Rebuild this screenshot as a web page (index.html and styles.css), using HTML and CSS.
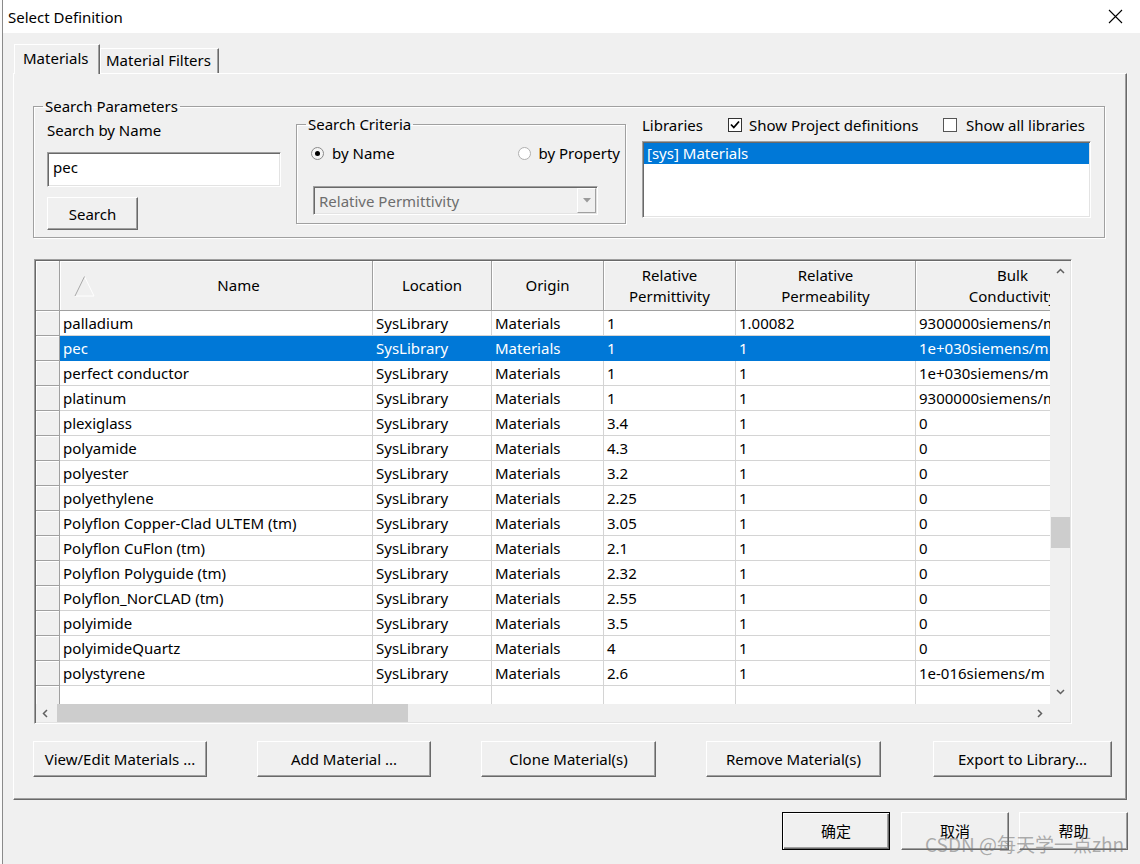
FILE: index.html
```html
<!DOCTYPE html>
<html>
<head>
<meta charset="utf-8">
<title>Select Definition</title>
<link rel="stylesheet" href="styles.css">
</head>
<body>
<div class="screen">
  <div class="bg-left"></div>
  <div class="window">
    <div class="titlebar">
      <span class="title">Select Definition</span>
      <svg class="close" width="15" height="15" viewBox="0 0 15 15"><path d="M1 1 L14 14 M14 1 L1 14" stroke="#000" stroke-width="1.1" fill="none"/></svg>
    </div>
    <div class="client">
      <div class="tabs">
        <div class="tab active">Materials</div>
        <div class="tab">Material Filters</div>
      </div>
      <div class="panel-row">
        <div class="panel">
          <fieldset class="group params">
            <legend>Search Parameters</legend>
            <div class="params-body">
              <div class="by-name">
                <div class="label">Search by Name</div>
                <div class="input">pec</div>
                <div class="btn search-btn">Search</div>
              </div>
              <fieldset class="group criteria">
                <legend>Search Criteria</legend>
                <div class="radios">
                  <span class="radio-item"><span class="radio checked"></span>by Name</span>
                  <span class="radio-item"><span class="radio"></span>by Property</span>
                </div>
                <div class="select">
                  <span class="select-text">Relative Permittivity</span>
                  <span class="drop"><svg width="8" height="5" viewBox="0 0 8 5"><path d="M0 0 L8 0 L4 4.5 Z" fill="#9a9a9a"/></svg></span>
                </div>
              </fieldset>
              <div class="libs">
                <div class="libs-head">
                  <span class="libs-label">Libraries</span>
                  <span class="check-item first"><span class="check"><svg width="12" height="12" viewBox="0 0 12 12"><path d="M2 5.5 L4.8 8.5 L10 2.5" fill="none" stroke="#000" stroke-width="1.8"/></svg></span>Show Project definitions</span>
                  <span class="check-item"><span class="check"></span>Show all libraries</span>
                </div>
                <div class="listbox"><div class="list-sel">[sys] Materials</div></div>
              </div>
            </div>
          </fieldset>

          <div class="grid">
            <div class="grid-main">
              <div class="grid-view">
                <div class="row head">
                  <div class="c rh"></div>
                  <div class="c w-name name-head">
                    <svg class="sort" width="21" height="22" viewBox="0 0 21 22"><path d="M10.5 1.5 L20 21 L1 21" fill="none" stroke="#ffffff" stroke-width="1"/><path d="M10.5 1.5 L1 21" fill="none" stroke="#a8a8a8" stroke-width="1"/></svg>
                    <span class="name-label">Name</span>
                  </div>
                  <div class="c w-loc">Location</div>
                  <div class="c w-org">Origin</div>
                  <div class="c w-perm">Relative<br>Permittivity</div>
                  <div class="c w-perma">Relative<br>Permeability</div>
                  <div class="c w-bulk">Bulk<br>Conductivity</div>
                </div>
                <div class="row"><div class="c rh"></div><div class="c w-name">palladium</div><div class="c w-loc">SysLibrary</div><div class="c w-org">Materials</div><div class="c w-perm">1</div><div class="c w-perma">1.00082</div><div class="c w-bulk">9300000siemens/m</div></div>
                <div class="row sel"><div class="c rh"></div><div class="c w-name">pec</div><div class="c w-loc">SysLibrary</div><div class="c w-org">Materials</div><div class="c w-perm">1</div><div class="c w-perma">1</div><div class="c w-bulk">1e+030siemens/m</div></div>
                <div class="row"><div class="c rh"></div><div class="c w-name">perfect conductor</div><div class="c w-loc">SysLibrary</div><div class="c w-org">Materials</div><div class="c w-perm">1</div><div class="c w-perma">1</div><div class="c w-bulk">1e+030siemens/m</div></div>
                <div class="row"><div class="c rh"></div><div class="c w-name">platinum</div><div class="c w-loc">SysLibrary</div><div class="c w-org">Materials</div><div class="c w-perm">1</div><div class="c w-perma">1</div><div class="c w-bulk">9300000siemens/m</div></div>
                <div class="row"><div class="c rh"></div><div class="c w-name">plexiglass</div><div class="c w-loc">SysLibrary</div><div class="c w-org">Materials</div><div class="c w-perm">3.4</div><div class="c w-perma">1</div><div class="c w-bulk">0</div></div>
                <div class="row"><div class="c rh"></div><div class="c w-name">polyamide</div><div class="c w-loc">SysLibrary</div><div class="c w-org">Materials</div><div class="c w-perm">4.3</div><div class="c w-perma">1</div><div class="c w-bulk">0</div></div>
                <div class="row"><div class="c rh"></div><div class="c w-name">polyester</div><div class="c w-loc">SysLibrary</div><div class="c w-org">Materials</div><div class="c w-perm">3.2</div><div class="c w-perma">1</div><div class="c w-bulk">0</div></div>
                <div class="row"><div class="c rh"></div><div class="c w-name">polyethylene</div><div class="c w-loc">SysLibrary</div><div class="c w-org">Materials</div><div class="c w-perm">2.25</div><div class="c w-perma">1</div><div class="c w-bulk">0</div></div>
                <div class="row"><div class="c rh"></div><div class="c w-name">Polyflon Copper-Clad ULTEM (tm)</div><div class="c w-loc">SysLibrary</div><div class="c w-org">Materials</div><div class="c w-perm">3.05</div><div class="c w-perma">1</div><div class="c w-bulk">0</div></div>
                <div class="row"><div class="c rh"></div><div class="c w-name">Polyflon CuFlon (tm)</div><div class="c w-loc">SysLibrary</div><div class="c w-org">Materials</div><div class="c w-perm">2.1</div><div class="c w-perma">1</div><div class="c w-bulk">0</div></div>
                <div class="row"><div class="c rh"></div><div class="c w-name">Polyflon Polyguide (tm)</div><div class="c w-loc">SysLibrary</div><div class="c w-org">Materials</div><div class="c w-perm">2.32</div><div class="c w-perma">1</div><div class="c w-bulk">0</div></div>
                <div class="row"><div class="c rh"></div><div class="c w-name">Polyflon_NorCLAD (tm)</div><div class="c w-loc">SysLibrary</div><div class="c w-org">Materials</div><div class="c w-perm">2.55</div><div class="c w-perma">1</div><div class="c w-bulk">0</div></div>
                <div class="row"><div class="c rh"></div><div class="c w-name">polyimide</div><div class="c w-loc">SysLibrary</div><div class="c w-org">Materials</div><div class="c w-perm">3.5</div><div class="c w-perma">1</div><div class="c w-bulk">0</div></div>
                <div class="row"><div class="c rh"></div><div class="c w-name">polyimideQuartz</div><div class="c w-loc">SysLibrary</div><div class="c w-org">Materials</div><div class="c w-perm">4</div><div class="c w-perma">1</div><div class="c w-bulk">0</div></div>
                <div class="row"><div class="c rh"></div><div class="c w-name">polystyrene</div><div class="c w-loc">SysLibrary</div><div class="c w-org">Materials</div><div class="c w-perm">2.6</div><div class="c w-perma">1</div><div class="c w-bulk">1e-016siemens/m</div></div>
                <div class="row"><div class="c rh"></div><div class="c w-name"></div><div class="c w-loc"></div><div class="c w-org"></div><div class="c w-perm"></div><div class="c w-perma"></div><div class="c w-bulk"></div></div>
              </div>
              <div class="vscroll">
                <svg class="arr" width="9" height="6" viewBox="0 0 9 6"><path d="M1 5 L4.5 1.5 L8 5" fill="none" stroke="#606060" stroke-width="1.5"/></svg>
                <div class="vtrack"><div class="vthumb"></div></div>
                <svg class="arr" width="9" height="6" viewBox="0 0 9 6"><path d="M1 1 L4.5 4.5 L8 1" fill="none" stroke="#606060" stroke-width="1.5"/></svg>
              </div>
            </div>
            <div class="hscroll-row">
              <div class="hscroll">
                <svg class="arr" width="6" height="9" viewBox="0 0 6 9"><path d="M5 1 L1.5 4.5 L5 8" fill="none" stroke="#606060" stroke-width="1.5"/></svg>
                <div class="htrack"><div class="hthumb"></div></div>
                <svg class="arr" width="6" height="9" viewBox="0 0 6 9"><path d="M1 1 L4.5 4.5 L1 8" fill="none" stroke="#606060" stroke-width="1.5"/></svg>
              </div>
              <div class="corner"></div>
            </div>
          </div>

          <div class="actions">
            <div class="btn a1">View/Edit Materials ...</div>
            <div class="btn a2">Add Material ...</div>
            <div class="btn a3">Clone Material(s)</div>
            <div class="btn a4">Remove Material(s)</div>
            <div class="btn a5">Export to Library...</div>
          </div>
        </div>
        <div class="bg-right"></div>
      </div>
      <div class="footer">
        <div class="btn fbtn default">确定</div>
        <div class="btn fbtn b-cancel">取消</div>
        <div class="btn fbtn b-help">帮助</div>
        <div class="watermark">CSDN @每天学一点zhn</div>
      </div>
    </div>
  </div>
</div>
</body>
</html>
```

FILE: styles.css
```css
* { box-sizing: border-box; }
html, body { margin: 0; padding: 0; }
body {
  width: 1140px;
  height: 864px;
  overflow: hidden;
  background: #f0f0f0;
  font-family: "Noto Sans", "Noto Sans CJK SC", sans-serif;
  font-size: 15px;
  color: #000;
}
.screen { display: flex; height: 864px; }
.bg-left { width: 3px; flex: none; background: #fafafa; border-right: 1px solid #8a8a8a; }
.window { flex: 1; display: flex; flex-direction: column; background: #f0f0f0; }

.titlebar {
  height: 33px;
  flex: none;
  background: #fff;
  display: flex;
  align-items: center;
  justify-content: space-between;
  padding: 0 17px 0 5px;
}
.title { font-size: 15px; line-height: 20px; }

.client { flex: 1; display: flex; flex-direction: column; }

.tabs { display: flex; align-items: flex-end; margin: 11px 0 0 11px; height: 29px; }
.tab {
  height: 25px;
  line-height: 23px;
  padding: 0 5px;
  border-top: 1px solid #fff;
  border-left: 1px solid #fff;
  border-right: 1px solid #696969;
  box-shadow: inset -1px 0 0 #a0a0a0;
  width: 119px;
  text-align: left;
}
.tab.active {
  height: 30px;
  width: 86px;
  line-height: 26px;
  padding-left: 8px;
  margin-bottom: -1px;
  position: relative;
  z-index: 1;
  background: #f0f0f0;
}

.panel-row { display: flex; }
.panel {
  margin-left: 10px;
  width: 1114px;
  height: 727px;
  border-top: 1px solid #fff;
  border-left: 1px solid #fff;
  border-right: 1px solid #696969;
  border-bottom: 1px solid #696969;
  box-shadow: inset -1px -1px 0 #a0a0a0;
  padding: 22px 0 0 19px;
}
.bg-right { width: 13px; height: 727px; border-left: 1px solid #f8f8f8; }

/* group boxes */
.group {
  margin: 0;
  padding: 0;
  border: 1px solid #a0a0a0;
  box-shadow: inset 1px 1px 0 #fff, 1px 1px 0 #fff;
  min-width: 0;
}
.group legend {
  padding: 0 2px;
  margin-left: 9px;
  line-height: 20px;
  font-size: 15px;
}
.params { width: 1072px; height: 142px; }
.params-body { display: flex; align-items: flex-start; padding-left: 13px; }

.by-name { width: 234px; display: flex; flex-direction: column; align-items: flex-start; }
.label { line-height: 20px; margin-top: 4px; }
.input {
  margin-top: 12px;
  width: 234px;
  height: 35px;
  background: #fff;
  border: 1px solid;
  border-color: #a0a0a0 #fff #fff #a0a0a0;
  box-shadow: inset 1px 1px 0 #696969, inset -1px -1px 0 #e3e3e3;
  padding: 4px 0 0 5px;
  line-height: 20px;
}

.btn {
  background: #f0f0f0;
  border: 1px solid;
  border-color: #fff #696969 #696969 #fff;
  box-shadow: inset -1px -1px 0 #a0a0a0;
  display: flex;
  align-items: center;
  justify-content: center;
  line-height: 20px;
  white-space: nowrap;
}
.search-btn { margin-top: 10px; width: 91px; height: 33px; }

.criteria { margin: -2px 0 0 15px; width: 330px; height: 110px; }
.radios {
  display: flex;
  justify-content: space-between;
  margin-top: 9px;
  padding: 0 5px 0 14px;
  line-height: 20px;
}
.radio-item { display: flex; align-items: center; }
.radio {
  width: 13px;
  height: 13px;
  border-radius: 50%;
  border: 1px solid #b0b0b0;
  background: #fff;
  margin-right: 8px;
  display: inline-flex;
  align-items: center;
  justify-content: center;
}
.radio.checked { background: #f4f4f4; border-color: #8a8a8a; }
.radio.checked::after {
  content: "";
  width: 5px;
  height: 5px;
  border-radius: 50%;
  background: #000;
}
.select {
  margin: 23px 0 0 16px;
  width: 285px;
  height: 29px;
  display: flex;
  align-items: center;
  justify-content: space-between;
  background: #f0f0f0;
  border: 1px solid;
  border-color: #a0a0a0 #fff #fff #a0a0a0;
  box-shadow: inset 1px 1px 0 #696969, inset -1px -1px 0 #e3e3e3;
  padding: 0 1px 0 5px;
}
.select-text { color: #6d6d6d; line-height: 20px; }
.drop {
  width: 19px;
  height: 25px;
  border: 1px solid;
  border-color: #fff #a0a0a0 #a0a0a0 #fff;
  display: flex;
  align-items: center;
  justify-content: center;
  background: #f0f0f0;
}

.libs { margin: -1px 0 0 16px; width: 449px; }
.libs-head { display: flex; align-items: center; line-height: 20px; }
.libs-label { width: 86px; }
.check-item { display: flex; align-items: center; }
.check-item.first { width: 215px; }
.check {
  width: 14px;
  height: 14px;
  border: 1px solid #333;
  background: #fff;
  margin-right: 7px;
  display: inline-flex;
  align-items: center;
  justify-content: center;
}
.check-item:not(.first) .check { margin-right: 9px; border-color: #555; }
.listbox {
  margin-top: 6px;
  width: 449px;
  height: 77px;
  background: #fff;
  border: 1px solid;
  border-color: #a0a0a0 #fff #fff #a0a0a0;
  box-shadow: inset 1px 1px 0 #696969, inset -1px -1px 0 #e3e3e3;
  padding: 1px;
}
.list-sel {
  height: 21px;
  background: #0078d7;
  color: #fff;
  padding-left: 3px;
  line-height: 21px;
}

/* grid */
.grid {
  margin: 21px 0 0 1px;
  width: 1038px;
  height: 465px;
  border: 1px solid;
  border-color: #a0a0a0 #fff #fff #a0a0a0;
  box-shadow: inset 1px 1px 0 #696969, inset -1px -1px 0 #e3e3e3;
  padding: 1px;
  display: flex;
  flex-direction: column;
}
.grid-main { display: flex; height: 443px; }
.grid-view { width: 1014px; height: 443px; overflow: hidden; background: #fff; }
.row { display: flex; height: 25px; width: max-content; }
.row.head { height: 50px; }
.c {
  flex: none;
  height: 100%;
  border-right: 1px solid #d4d4d4;
  border-bottom: 1px solid #d4d4d4;
  padding-left: 3px;
  line-height: 24px;
  white-space: nowrap;
  overflow: hidden;
}
.rh {
  width: 24px;
  background: #f0f0f0;
  border-right: 1px solid #a0a0a0;
  border-bottom: 1px solid #a0a0a0;
  box-shadow: inset 1px 1px 0 #fff;
}
.w-name { width: 313px; }
.w-loc { width: 119px; }
.w-org { width: 112px; }
.w-perm { width: 132px; }
.w-perma { width: 180px; }
.w-bulk { width: 194px; }
.head .c {
  background: #f0f0f0;
  border-right: 1px solid #a0a0a0;
  border-bottom: 1px solid #a0a0a0;
  box-shadow: inset 1px 1px 0 #fff;
  display: flex;
  align-items: center;
  justify-content: center;
  text-align: center;
  line-height: 21px;
  padding: 0;
}
.head .name-head { justify-content: flex-start; }
.sort { margin-left: 14px; flex: none; }
.name-label { flex: 1; text-align: center; padding-left: 10px; }
.row.sel .c:not(.rh) { background: #0078d7; color: #fff; border-color: #0078d7; }

.vscroll {
  width: 20px;
  height: 443px;
  background: #f0f0f0;
  display: flex;
  flex-direction: column;
  align-items: center;
  padding: 7px 0 9px;
}
.vtrack { flex: 1; width: 20px; padding-top: 243px; }
.vthumb { width: 19px; height: 31px; background: #cdcdcd; margin-left: 1px; }

.hscroll-row { display: flex; height: 18px; }
.hscroll {
  width: 1014px;
  height: 18px;
  background: #f0f0f0;
  display: flex;
  align-items: center;
  padding: 0 7px 0 6px;
}
.htrack { flex: 1; height: 18px; padding-left: 9px; padding-right: 10px; }
.hthumb { width: 351px; height: 18px; background: #cdcdcd; }
.corner { width: 20px; height: 18px; background: #f0f0f0; }

.actions { display: flex; gap: 50px; margin-top: 17px; }
.actions .btn { height: 36px; }
.a1 { width: 174px; }
.a2 { width: 174px; }
.a3 { width: 175px; }
.a4 { width: 175px; }
.a5 { width: 179px; margin-left: 2px; }

.footer {
  position: relative;
  flex: 1;
  display: flex;
  justify-content: flex-end;
  align-items: flex-start;
  padding: 12px 12px 0 0;
}
.fbtn { width: 108px; height: 38px; font-family: "Noto Sans CJK SC", sans-serif; font-size: 15px; }
.b-cancel { margin-left: 11px; }
.b-help { margin-left: 10px; width: 109px; }
.fbtn.default {
  border: 1px solid #000;
  box-shadow: inset 1px 1px 0 #fff, inset -1px -1px 0 #696969, inset -2px -2px 0 #a0a0a0;
}
.watermark {
  position: absolute;
  left: 922px;
  top: 33px;
  font-family: "Noto Sans CJK SC", sans-serif;
  font-size: 19px;
  line-height: 22px;
  color: rgba(110, 110, 110, 0.55);
  white-space: nowrap;
}
```
